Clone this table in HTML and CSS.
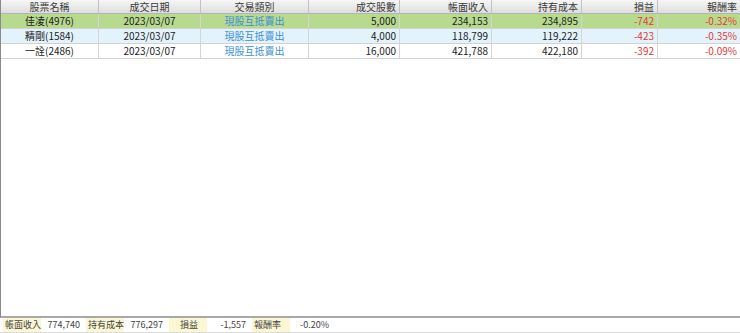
FILE: index.html
```html
<!DOCTYPE html>
<html lang="zh-Hant">
<head>
<meta charset="utf-8">
<link rel="stylesheet" href="styles.css">
</head>
<body>
<div class="app">
  <div class="grid">
    <div class="row head">
      <div class="c c1 ctr">股票名稱</div>
      <div class="c c2 ctr">成交日期</div>
      <div class="c c3 ctr">交易類別</div>
      <div class="c c4 rt">成交股數</div>
      <div class="c c5 rt">帳面收入</div>
      <div class="c c6 rt">持有成本</div>
      <div class="c c7 rt">損益</div>
      <div class="c c8 rt">報酬率</div>
    </div>
    <div class="row sel">
      <div class="c c1 ctr">佳凌(4976)</div>
      <div class="c c2 ctr">2023/03/07</div>
      <div class="c c3 ctr blue">現股互抵賣出</div>
      <div class="c c4 rt">5,000</div>
      <div class="c c5 rt">234,153</div>
      <div class="c c6 rt">234,895</div>
      <div class="c c7 rt red">-742</div>
      <div class="c c8 rt red">-0.32%</div>
    </div>
    <div class="row alt">
      <div class="c c1 ctr">精剛(1584)</div>
      <div class="c c2 ctr">2023/03/07</div>
      <div class="c c3 ctr blue">現股互抵賣出</div>
      <div class="c c4 rt">4,000</div>
      <div class="c c5 rt">118,799</div>
      <div class="c c6 rt">119,222</div>
      <div class="c c7 rt red">-423</div>
      <div class="c c8 rt red">-0.35%</div>
    </div>
    <div class="row">
      <div class="c c1 ctr">一詮(2486)</div>
      <div class="c c2 ctr">2023/03/07</div>
      <div class="c c3 ctr blue">現股互抵賣出</div>
      <div class="c c4 rt">16,000</div>
      <div class="c c5 rt">421,788</div>
      <div class="c c6 rt">422,180</div>
      <div class="c c7 rt red">-392</div>
      <div class="c c8 rt red">-0.09%</div>
    </div>
  </div>
  <div class="foot">
    <div class="lbl">帳面收入</div>
    <div class="val">774,740</div>
    <div class="lbl">持有成本</div>
    <div class="val">776,297</div>
    <div class="lbl ctr">損益</div>
    <div class="val">-1,557</div>
    <div class="lbl">報酬率</div>
    <div class="val">-0.20%</div>
  </div>
</div>
</body>
</html>
```
FILE: styles.css
```css
html, body {
  margin: 0;
  padding: 0;
  background: #ffffff;
}
.app {
  width: 740px;
  height: 333px;
  display: flex;
  flex-direction: column;
  font-family: "Noto Sans CJK TC", "Noto Sans", sans-serif;
  font-size: 10px;
  color: #222;
}
.grid {
  flex: 1;
  border-left: 1px solid #8a8a8a;
  border-bottom: 2px solid #a8a8a8;
  overflow: hidden;
}
.row {
  display: flex;
  height: 14px;
  border-bottom: 1px solid #d2d2d2;
  line-height: 14px;
}
.row.head {
  height: 13px;
  line-height: 13px;
  background: linear-gradient(#f6f6f6, #dedede);
  border-bottom: 1px solid #b4b4b4;
  color: #3a3a3a;
}
.row.sel { background: #b7da8e; }
.row.alt { background: #e3f3fc; }
.c {
  box-sizing: border-box;
  border-right: 1px solid #d4d4d4;
  padding: 0 3px;
  white-space: nowrap;
  overflow: hidden;
}
.head .c { border-right-color: #c2c2c2; }
.c1 { width: 98px; }
.c2 { width: 102px; }
.c3 { width: 108px; }
.c4 { width: 91px; }
.c5 { width: 92px; }
.c6 { width: 90px; }
.c7 { width: 76px; }
.c8 { width: 82px; border-right: none; }
.ctr { text-align: center; }
.rt { text-align: right; }
.blue { color: #3d8fd6; }
.red { color: #e23a36; }
.foot {
  height: 14px;
  display: flex;
  align-items: stretch;
  padding-left: 3px;
  border-bottom: 1px solid #dcdcdc;
  font-family: "Noto Sans CJK TC", sans-serif;
  font-size: 9px;
  line-height: 14px;
  color: #444;
}
.lbl {
  width: 38px;
  padding-left: 2px;
  box-sizing: border-box;
  background: #fbf7d2;
}
.val {
  width: 43px;
  text-align: right;
  padding-right: 4px;
  box-sizing: border-box;
}
.val + .lbl { margin-left: 2px; }
```
